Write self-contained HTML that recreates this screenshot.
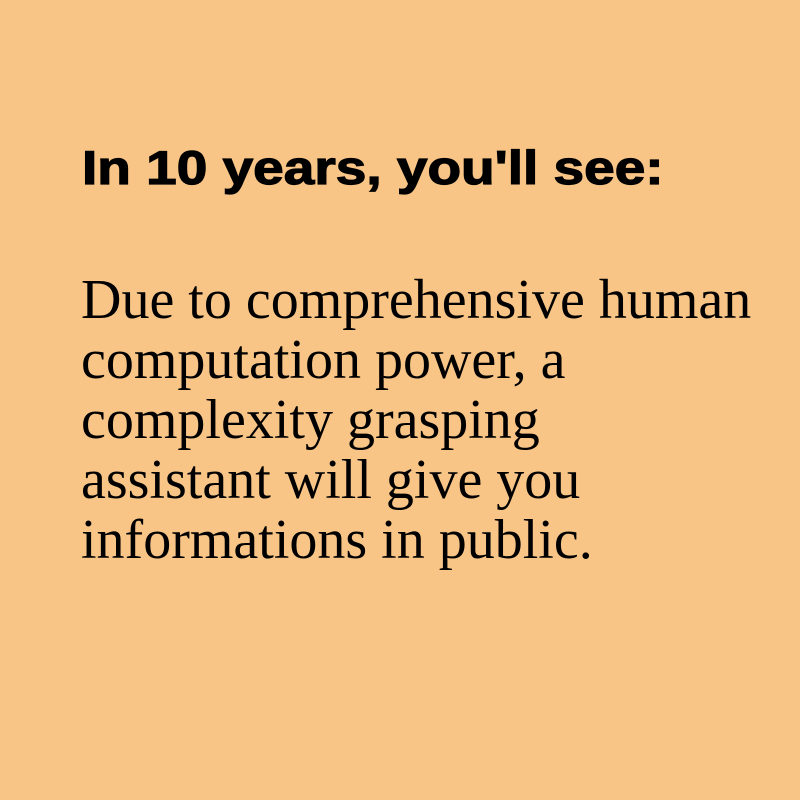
<!DOCTYPE html>
<html><head><meta charset="utf-8"><style>
html,body{margin:0;padding:0;}
body{width:800px;height:800px;background:#F8C587;position:relative;overflow:hidden;}
h1{position:absolute;left:82px;top:144px;margin:0;font:bold 47px/1 "Liberation Sans",sans-serif;color:#000;white-space:nowrap;transform:scaleX(1.17);transform-origin:0 0;-webkit-text-stroke:1.2px #000;}
p{position:absolute;left:81px;top:270px;margin:0;font:56px/60px "Liberation Serif",serif;color:#000;white-space:nowrap;}
</style></head><body>
<h1>In 10 years, you'll see:</h1>
<p>Due to comprehensive human<br>computation power, a<br>complexity grasping<br>assistant will give you<br>informations in public.</p>
</body></html>
